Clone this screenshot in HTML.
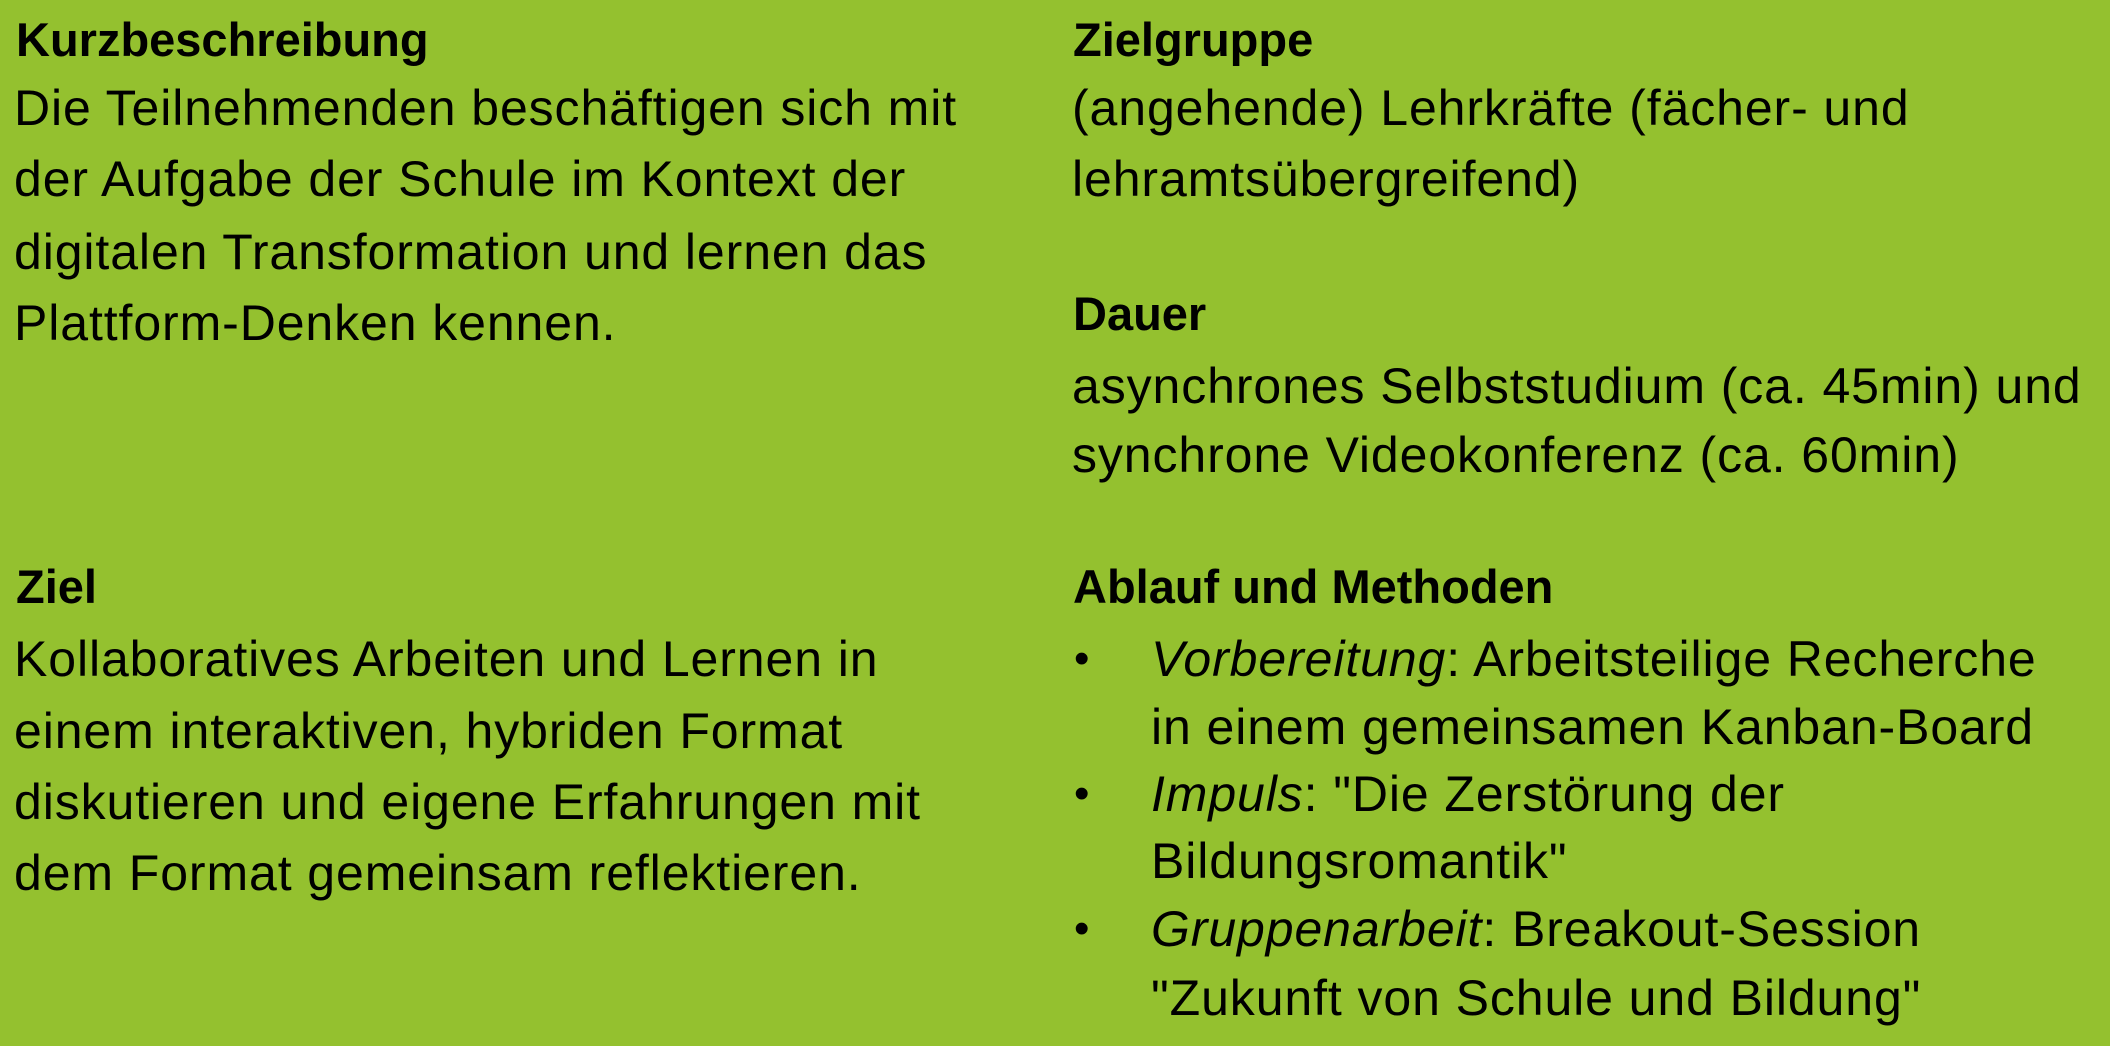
<!DOCTYPE html>
<html><head><meta charset="utf-8"><style>
html,body{margin:0;padding:0}
body{width:2110px;height:1046px;background:#94c12f;position:relative;overflow:hidden;font-family:"Liberation Sans",Arial,sans-serif;color:#000}
.l{position:absolute;white-space:nowrap;font-size:50px;letter-spacing:0.9px;line-height:70px;height:70px}
.h{font-weight:bold;font-size:47px;letter-spacing:0}
.b{position:absolute;font-size:44px;line-height:70px}
</style></head><body>
<div class="l h" style="left:16px;top:5px">Kurzbeschreibung</div>
<div class="l" style="left:14px;top:73px">Die Teilnehmenden beschäftigen sich mit</div>
<div class="l" style="left:14px;top:144px">der Aufgabe der Schule im Kontext der</div>
<div class="l" style="left:14px;top:217px">digitalen Transformation und lernen das</div>
<div class="l" style="left:14px;top:288px">Plattform-Denken kennen.</div>

<div class="l h" style="left:16px;top:552px">Ziel</div>
<div class="l" style="left:14px;top:624px">Kollaboratives Arbeiten und Lernen in</div>
<div class="l" style="left:14px;top:696px">einem interaktiven, hybriden Format</div>
<div class="l" style="left:14px;top:767px">diskutieren und eigene Erfahrungen mit</div>
<div class="l" style="left:14px;top:838px">dem Format gemeinsam reflektieren.</div>

<div class="l h" style="left:1073px;top:5px">Zielgruppe</div>
<div class="l" style="left:1072px;top:73px">(angehende) Lehrkräfte (fächer- und</div>
<div class="l" style="left:1072px;top:144px">lehramtsübergreifend)</div>

<div class="l h" style="left:1073px;top:279px">Dauer</div>
<div class="l" style="left:1072px;top:351px">asynchrones Selbststudium (ca. 45min) und</div>
<div class="l" style="left:1072px;top:420px">synchrone Videokonferenz (ca. 60min)</div>

<div class="l h" style="left:1073px;top:552px">Ablauf und Methoden</div>
<div class="b" style="left:1074px;top:624px">•</div>
<div class="l" style="left:1151px;top:624px"><i>Vorbereitung</i>: Arbeitsteilige Recherche</div>
<div class="l" style="left:1151px;top:692px">in einem gemeinsamen Kanban-Board</div>
<div class="b" style="left:1074px;top:759px">•</div>
<div class="l" style="left:1151px;top:759px"><i>Impuls</i>: "Die Zerstörung der</div>
<div class="l" style="left:1151px;top:826px">Bildungsromantik"</div>
<div class="b" style="left:1074px;top:894px">•</div>
<div class="l" style="left:1151px;top:894px"><i>Gruppenarbeit</i>: Breakout-Session</div>
<div class="l" style="left:1151px;top:963px">"Zukunft von Schule und Bildung"</div>
</body></html>
